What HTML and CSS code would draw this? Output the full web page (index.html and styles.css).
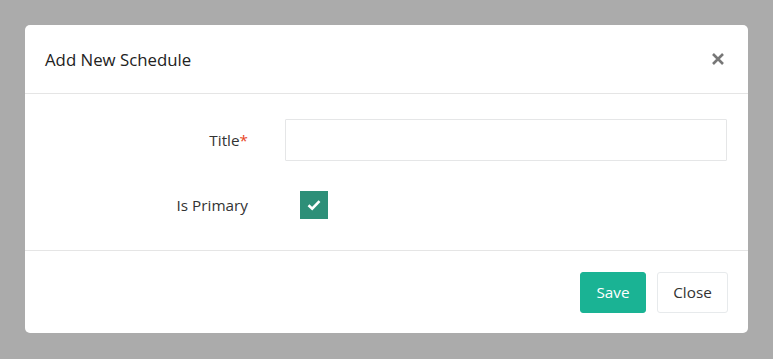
FILE: index.html
```html
<!DOCTYPE html>
<html>
<head>
	<title>Add New Schedule</title>
	<link rel="stylesheet" href="styles.css">
</head>
<body>
<div class="modal">
	<div class="modal-header">
		<h4 class="modal-title">Add New Schedule</h4>
		<span class="close">
			<svg width="14" height="14" viewBox="0 0 14 14"><path d="M2 2L12 12M12 2L2 12" stroke="#777" stroke-width="2.6" stroke-linecap="butt"/></svg>
		</span>
	</div>
	<div class="modal-body">
		<div class="form-row">
			<label class="form-label">Title<span class="req">*</span></label>
			<div class="form-field"><input type="text" class="form-input"></div>
		</div>
		<div class="form-row">
			<label class="form-label">Is Primary</label>
			<div class="form-field">
				<span class="check">
					<svg width="14" height="12" viewBox="0 0 14 12"><path d="M1.5 6.2L5.2 9.6L12.5 2.2" fill="none" stroke="#fff" stroke-width="2.6"/></svg>
				</span>
			</div>
		</div>
	</div>
	<div class="modal-footer">
		<button class="btn btn-save">Save</button>
		<button class="btn btn-close">Close</button>
	</div>
</div>
</body>
</html>
```

FILE: styles.css
```css
*{
	margin:0px;
	padding:0px;
	box-sizing:border-box;
}
body{
	background:#ababab;
	font-family:"Open Sans", "Noto Sans", sans-serif;
	color:#333;
	padding:25px;
}
.modal{
	width:723px;
	height:308px;
	background:#fff;
	border-radius:5px;
	display:flex;
	flex-direction:column;
}
.modal-header{
	height:69px;
	padding:0 21px 0 20px;
	display:flex;
	align-items:center;
	justify-content:space-between;
	border-bottom:1px solid #e5e5e5;
}
.modal-title{
	font-size:16.8px;
	font-weight:normal;
	color:#222;
}
.close{
	display:flex;
	margin-right:2px;
}
.modal-body{
	height:157px;
	padding:25px 20px 0 0;
	border-bottom:1px solid #e5e5e5;
	display:flex;
	flex-direction:column;
	gap:30px;
}
.form-row{
	display:grid;
	grid-template-columns:223px 1fr;
	gap:37px;
	align-items:center;
}
.form-label{
	text-align:right;
	font-size:15.3px;
	color:#333;
}
.req{
	color:#e8451e;
}
.form-input{
	display:block;
	width:442px;
	height:42px;
	border:1px solid #e5e6e7;
	border-radius:1px;
}
.check{
	display:flex;
	align-items:center;
	justify-content:center;
	width:28px;
	height:28px;
	margin-left:15px;
	background:#2d8f78;
}
.modal-footer{
	flex:1;
	display:flex;
	justify-content:flex-end;
	align-items:center;
	gap:11px;
	padding:0 20px 0 0;
}
.btn{
	height:41px;
	border-radius:3px;
	font-family:inherit;
	font-size:15.3px;
	cursor:pointer;
}
.btn-save{
	width:66px;
	background:#1ab394;
	border:1px solid #1ab394;
	color:#fff;
}
.btn-close{
	width:71px;
	background:#fff;
	border:1px solid #e7eaec;
	color:#333;
}
```
